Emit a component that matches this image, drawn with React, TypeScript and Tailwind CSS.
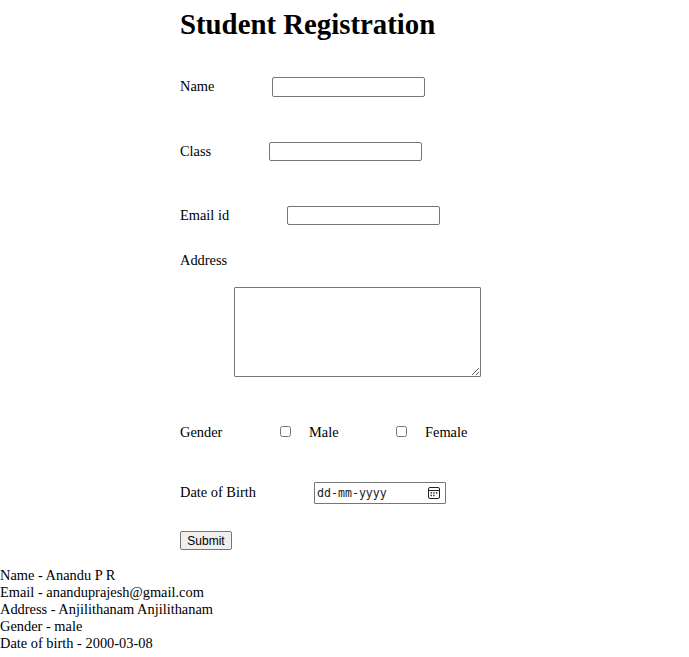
import React from "react";

const serif = "font-['Liberation_Serif','Times_New_Roman',serif]";

const field = "w-[153px] rounded-[2px] border border-[#767676] bg-white px-0.5 text-[13px] outline-none";

function CalendarIcon() {
  return (
    <svg width="12" height="12" viewBox="0 0 12 12" fill="none" stroke="#222" className="block">
      <rect x="0.5" y="0.5" width="11" height="11" rx="1.5" />
      <path d="M1 3.5h10" />
      <g fill="#222" stroke="none">
        <rect x="2.5" y="5.2" width="1.4" height="1.4" />
        <rect x="5.2" y="5.2" width="1.4" height="1.4" />
        <rect x="7.9" y="5.2" width="1.4" height="1.4" />
        <rect x="2.5" y="7.8" width="1.4" height="1.4" />
        <rect x="5.2" y="7.8" width="1.4" height="1.4" />
      </g>
    </svg>
  );
}

export default function App() {
  return (
    <div className={`${serif} h-[657px] w-[689px] overflow-hidden bg-white text-[14.4px] leading-[17px] text-black`}>
      <form className="flex h-[567px] flex-col items-start pl-[180px]" onSubmit={(e) => e.preventDefault()}>
        <h1 className="mt-[7px] h-[34px] text-[28.8px] leading-[34px] font-bold">Student Registration</h1>
        <label className="mt-9 flex h-5 items-start">
          <span className="mt-px w-[92px]">Name</span>
          <input className={`${field} h-5`} />
        </label>
        <label className="mt-[45px] flex h-[19px] items-center">
          <span className="w-[89px]">Class</span>
          <input className={`${field} h-[19px]`} />
        </label>
        <label className="mt-[45px] flex h-[19px] items-center">
          <span className="w-[107px]">Email id</span>
          <input className={`${field} h-[19px]`} />
        </label>
        <label className="mt-[27px] flex flex-col">
          <span>Address</span>
          <textarea className="mt-[18px] ml-[54px] block h-[90px] w-[247px] resize rounded-[1px] border border-[#767676] bg-white outline-none" />
        </label>
        <div className="mt-[47px] flex h-[17px] items-start">
          <span className="w-[100px]">Gender</span>
          <input type="checkbox" className="mt-[2px] h-[11px] w-[11px]" />
          <span className="ml-[18px] w-[87px]">Male</span>
          <input type="checkbox" className="mt-[2px] h-[11px] w-[11px]" />
          <span className="ml-[18px]">Female</span>
        </div>
        <div className="mt-[41px] flex h-[22px] items-start">
          <span className="mt-[2px] w-[134px]">Date of Birth</span>
          <div className="flex h-[22px] w-[132px] items-center justify-between rounded-[1px] border border-[#767676] pr-[5px] pl-[2px] font-['DejaVu_Sans_Mono',monospace] text-[11.6px] text-[#222]">
            <span>dd-mm-yyyy</span>
            <CalendarIcon />
          </div>
        </div>
        <button className="mt-[27px] h-[19px] w-[52px] rounded-[2px] border border-[#767676] bg-[#efefef] pt-px font-['Liberation_Sans',Arial,sans-serif] text-[12px] leading-[17px]">
          Submit
        </button>
      </form>
      <div>
        <p>Name - Anandu P R</p>
        <p>Email - ananduprajesh@gmail.com</p>
        <p>Address - Anjilithanam Anjilithanam</p>
        <p>Gender - male</p>
        <p>Date of birth - 2000-03-08</p>
      </div>
    </div>
  );
}
